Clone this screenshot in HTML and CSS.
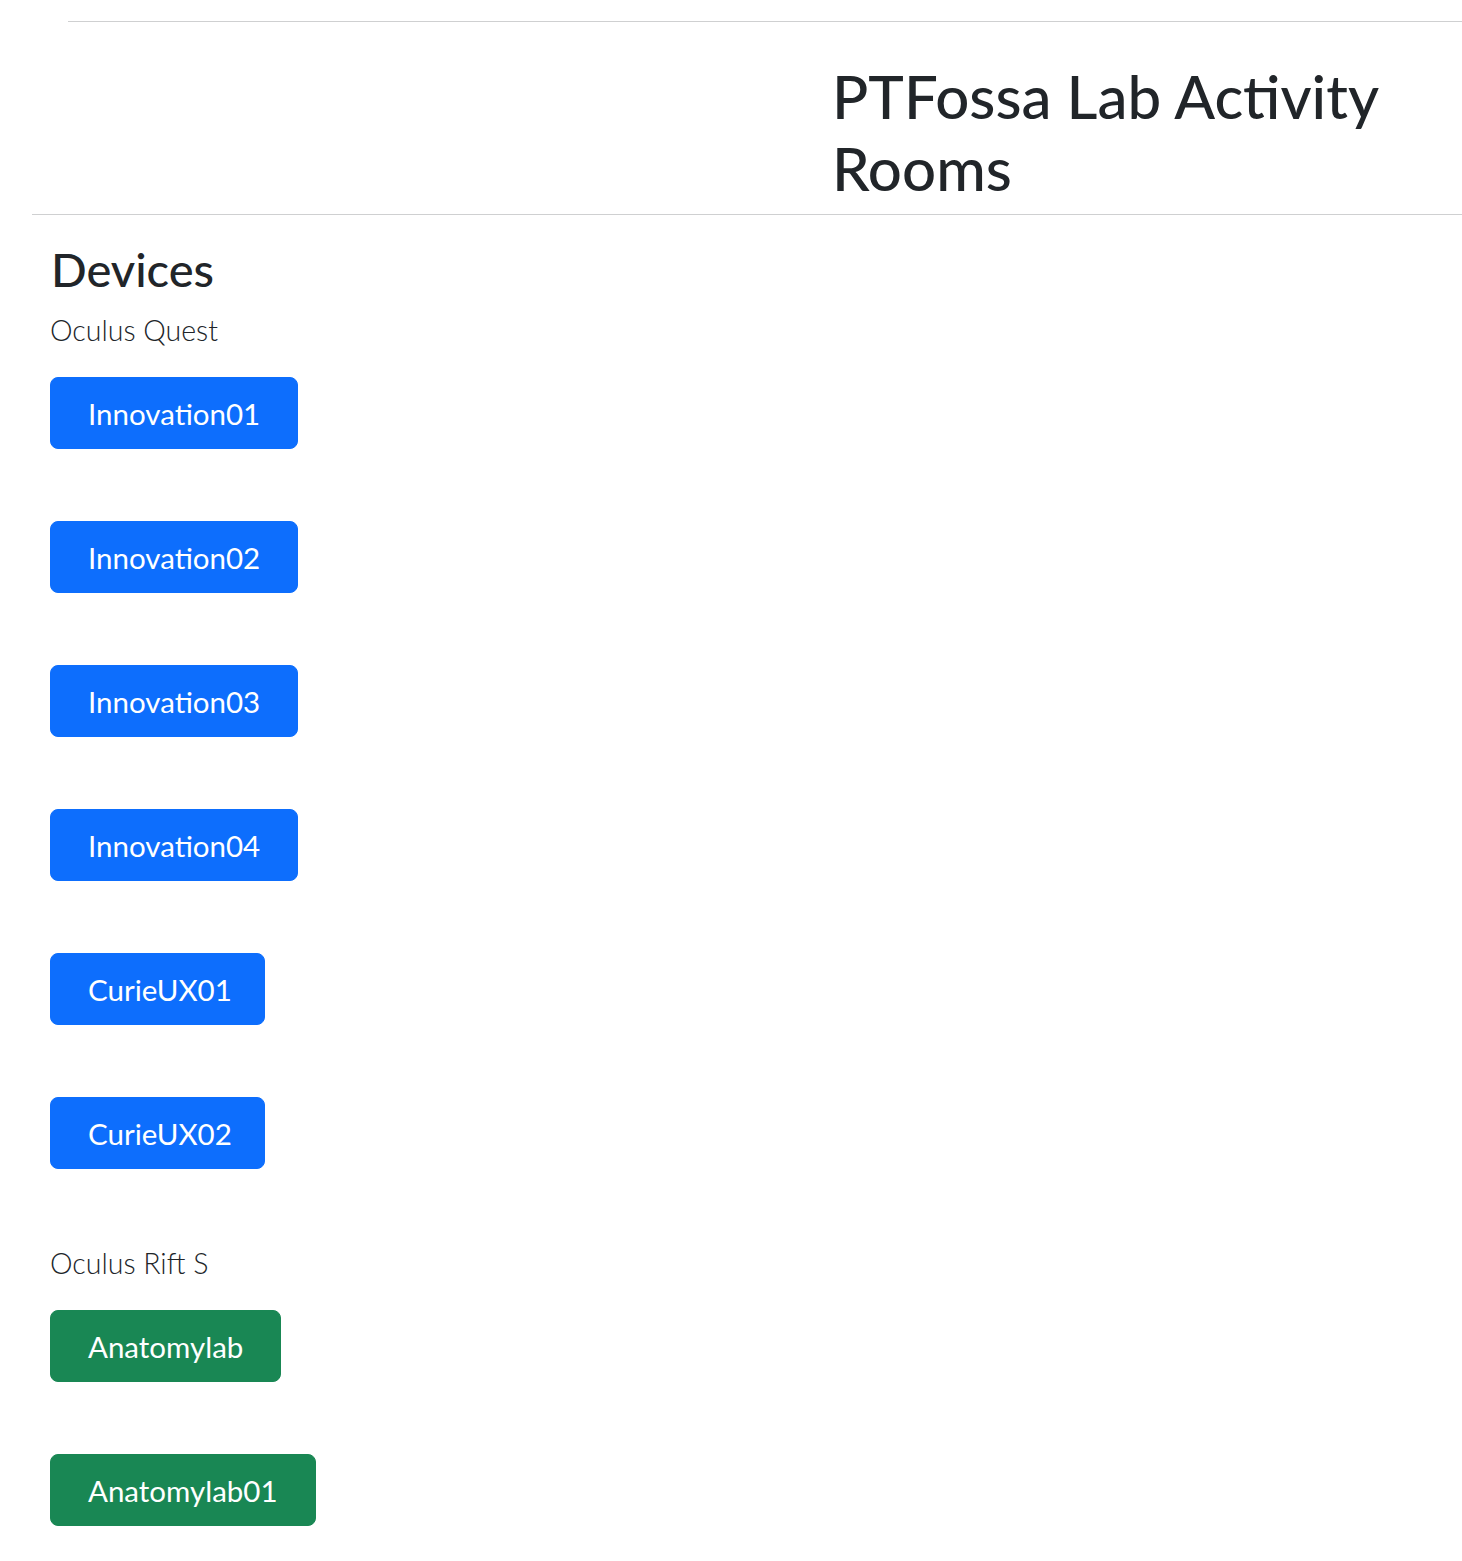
FILE: index.html
```html
<!DOCTYPE html>
<html lang="en">
<head>
<meta charset="utf-8">
<title>PTFossa Lab Activity Rooms</title>
<link rel="stylesheet" href="styles.css">
</head>
<body>
<div class="page">
  <hr class="rule rule-top">
  <header class="masthead">
    <h1 class="title">PTFossa Lab Activity Rooms</h1>
  </header>
  <hr class="rule rule-main">
  <main class="devices">
    <h2 class="devices-title">Devices</h2>
    <section class="group">
      <p class="lead">Oculus Quest</p>
      <div class="btn-list">
        <a class="btn btn-primary" href="#">Innovation01</a>
        <a class="btn btn-primary" href="#">Innovation02</a>
        <a class="btn btn-primary" href="#">Innovation03</a>
        <a class="btn btn-primary" href="#">Innovation04</a>
        <a class="btn btn-primary btn-narrow" href="#">CurieUX01</a>
        <a class="btn btn-primary btn-narrow" href="#">CurieUX02</a>
      </div>
    </section>
    <section class="group">
      <p class="lead">Oculus Rift S</p>
      <div class="btn-list">
        <a class="btn btn-success" href="#">Anatomylab</a>
        <a class="btn btn-success" href="#">Anatomylab01</a>
      </div>
    </section>
  </main>
</div>
</body>
</html>
```
FILE: styles.css
```css
* { box-sizing: border-box; }

body {
  margin: 0;
  font-family: Lato, "Open Sans", sans-serif;
  color: #212529;
  background: #fff;
}

.page {
  overflow: hidden;
}

.rule {
  border: 0;
  height: 1px;
  background: #cfd0d1;
  margin: 0;
}

.rule-top {
  margin-top: 21px;
  margin-left: 68px;
}

.rule-main {
  margin-left: 32px;
}

.masthead {
  padding-left: 832px;
  margin-top: 38px;
  margin-bottom: 10px;
}

.title {
  margin: 0;
  width: 620px;
  font-size: 60px;
  font-weight: 500;
  line-height: 72px;
}

.devices {
  padding-left: 50px;
  padding-top: 26px;
  padding-bottom: 40px;
}

.devices-title {
  margin: 0 0 0 1px;
  font-size: 47px;
  font-weight: 500;
  line-height: 56px;
}

.group {
  margin-top: 12px;
}

.group + .group {
  margin-top: 73px;
}

.lead {
  margin: 0 0 25px;
  font-size: 28.5px;
  font-weight: 300;
  line-height: 43px;
}

.btn-list {
  display: flex;
  flex-direction: column;
  align-items: flex-start;
  gap: 72px;
}

.btn {
  display: inline-block;
  height: 72px;
  padding: 13px 37px 12px;
  border: 1px solid transparent;
  border-radius: 8px;
  font-size: 29.5px;
  font-weight: 400;
  line-height: 45px;
  color: #fff;
  text-decoration: none;
  white-space: nowrap;
}

.btn-narrow {
  padding-left: 37px;
  padding-right: 32px;
}

.btn-primary {
  background: #0d6efd;
  border-color: #0d6efd;
}

.btn-success {
  background: #198754;
  border-color: #198754;
}
```
